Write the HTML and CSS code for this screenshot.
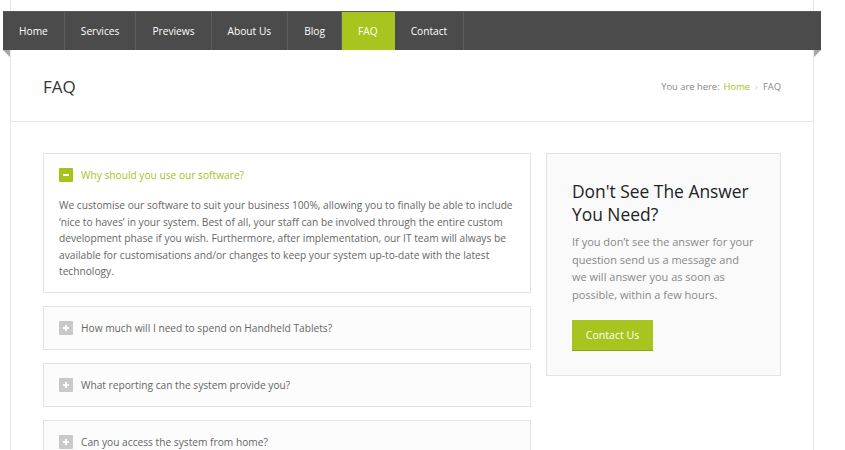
FILE: index.html
```html
<!DOCTYPE html>
<html>
<head>
<meta charset="utf-8">
<link rel="stylesheet" href="styles.css">
</head>
<body>
<div class="page">
  <nav class="nav">
    <a class="nav-item">Home</a>
    <a class="nav-item">Services</a>
    <a class="nav-item">Previews</a>
    <a class="nav-item">About Us</a>
    <a class="nav-item">Blog</a>
    <a class="nav-item active">FAQ</a>
    <a class="nav-item">Contact</a>
  </nav>
  <header class="title-bar">
    <h1 class="page-title">FAQ</h1>
    <div class="crumbs">You are here:<a class="crumb-link">Home</a><span class="crumb-sep">›</span><span>FAQ</span></div>
  </header>
  <main class="content">
    <section class="accordion">
      <div class="acc-item open">
        <div class="acc-head"><span class="acc-icon minus"></span><span class="acc-q">Why should you use our software?</span></div>
        <p class="acc-body">We customise our software to suit your business 100%, allowing you to finally be able to include ‘nice to haves’ in your system. Best of all, your staff can be involved through the entire custom development phase if you wish. Furthermore, after implementation, our IT team will always be available for customisations and/or changes to keep your system up-to-date with the latest technology.</p>
      </div>
      <div class="acc-item">
        <div class="acc-head"><span class="acc-icon plus"></span><span class="acc-q">How much will I need to spend on Handheld Tablets?</span></div>
      </div>
      <div class="acc-item">
        <div class="acc-head"><span class="acc-icon plus"></span><span class="acc-q">What reporting can the system provide you?</span></div>
      </div>
      <div class="acc-item">
        <div class="acc-head"><span class="acc-icon plus"></span><span class="acc-q">Can you access the system from home?</span></div>
      </div>
    </section>
    <aside class="side-box">
      <h2 class="side-title">Don't See The Answer You Need?</h2>
      <p class="side-text">If you don’t see the answer for your question send us a message and we will answer you as soon as possible, within a few hours.</p>
      <a class="btn">Contact Us</a>
    </aside>
  </main>
</div>
</body>
</html>
```
FILE: styles.css
```css
* { box-sizing: border-box; }
html, body { margin: 0; padding: 0; background: #fff; }
body { font-family: "Open Sans", "Liberation Sans", sans-serif; color: #666; }

.page {
  margin-left: 10px;
  width: 804px;
  min-height: 450px;
  border-left: 1px solid #e8e8e8;
  border-right: 1px solid #e8e8e8;
  padding-top: 11px;
}

.nav {
  position: relative;
  display: flex;
  height: 39px;
  margin: 0 -8px;
  background: #4b4b4b;
  border-top: 1px solid #5a5a5a;
}
.nav::before, .nav::after {
  content: "";
  position: absolute;
  top: 38px;
  width: 0; height: 0;
  border-style: solid;
}
.nav::before { left: 0; border-width: 0 7px 7px 0; border-color: transparent #a6a6a6 transparent transparent; }
.nav::after { right: 0; border-width: 7px 7px 0 0; border-color: #a6a6a6 transparent transparent transparent; }

.nav-item {
  display: flex;
  align-items: center;
  padding: 0 16px 1px;
  border-right: 1px solid #5e5e5e;
  color: #fff;
  font-size: 10.2px;
  text-decoration: none;
}
.nav-item.active { background: #a8c41e; border-right-color: #a8c41e; }

.title-bar {
  display: flex;
  align-items: center;
  justify-content: space-between;
  height: 72px;
  padding: 0 32px 0 32px;
  border-bottom: 1px solid #e6e6e6;
}
.page-title { margin: 0; font-size: 17px; font-weight: 400; color: #333; padding-top: 2px; }
.crumbs { font-size: 9.4px; color: #888; display: flex; align-items: center; padding-top: 1px; }
.crumb-link { color: #a5c31b; margin-left: 4px; }
.crumb-sep { color: #ccc; margin: 0 5px; }

.content {
  display: flex;
  align-items: flex-start;
  gap: 15px;
  padding: 31px 32px 0;
}
.accordion { width: 488px; display: flex; flex-direction: column; gap: 13px; }
.acc-item {
  border: 1px solid #e3e3e3;
  background: #fcfcfc;
  padding: 14px 15px 14px;
}
.acc-item.open { background: #fff; padding-bottom: 12px; }
.acc-head { display: flex; align-items: center; height: 14px; gap: 8px; }
.acc-icon {
  position: relative;
  width: 14px; height: 14px;
  border-radius: 1px;
  background: #c9c9c9;
  flex: none;
}
.acc-icon.minus { background: #a5c31b; }
.acc-icon::before {
  content: "";
  position: absolute;
  left: 4px; top: 6px;
  width: 6px; height: 2px;
  background: #fff;
}
.acc-icon.plus::after {
  content: "";
  position: absolute;
  left: 6px; top: 4px;
  width: 2px; height: 6px;
  background: #fff;
}
.acc-q { font-size: 10.2px; color: #666; }
.open .acc-q { color: #a5c31b; }
.acc-body { margin: 15px 0 0; font-size: 10.2px; line-height: 16.5px; color: #666; }

.side-box {
  width: 235px;
  border: 1px solid #e3e3e3;
  background: #fafafa;
  padding: 26px 25px 25px;
}
.side-title { margin: 0; font-size: 17.4px; line-height: 23px; font-weight: 400; color: #222; }
.side-text { margin: 7px 0 17px; font-size: 11px; line-height: 17.5px; color: #888; }
.btn {
  display: inline-flex;
  align-items: center;
  justify-content: center;
  width: 81px; height: 30px;
  background: #a8c41e;
  color: #fff;
  font-size: 10.6px;
  box-shadow: 0 1px 0 #8ea514;
}
```
